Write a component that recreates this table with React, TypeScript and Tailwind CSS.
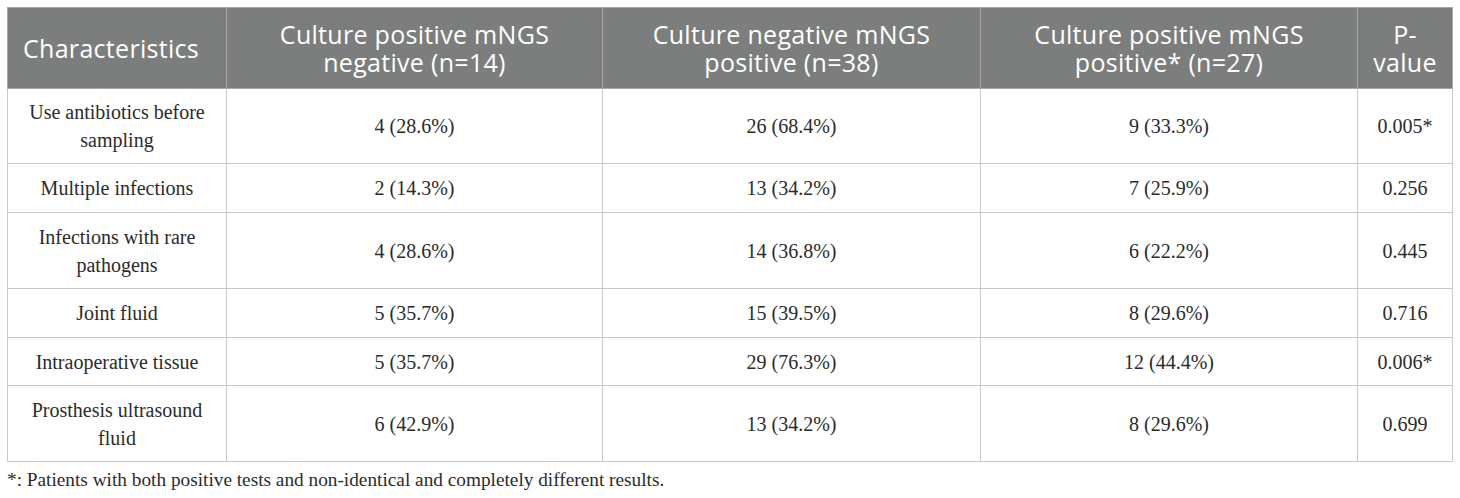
import React from "react";

const rows: [string, string, string, string, string][] = [
  ["Use antibiotics before sampling", "4 (28.6%)", "26 (68.4%)", "9 (33.3%)", "0.005*"],
  ["Multiple infections", "2 (14.3%)", "13 (34.2%)", "7 (25.9%)", "0.256"],
  ["Infections with rare pathogens", "4 (28.6%)", "14 (36.8%)", "6 (22.2%)", "0.445"],
  ["Joint fluid", "5 (35.7%)", "15 (39.5%)", "8 (29.6%)", "0.716"],
  ["Intraoperative tissue", "5 (35.7%)", "29 (76.3%)", "12 (44.4%)", "0.006*"],
  ["Prosthesis ultrasound fluid", "6 (42.9%)", "13 (34.2%)", "8 (29.6%)", "0.699"],
];

const heights = ["h-[75px]", "h-[49px]", "h-[76px]", "h-[49px]", "h-[48px]", "h-[76px]"];

export default function App() {
  return (
    <div className="bg-white w-[1460px] h-[498px] pl-[7px] pt-[7px]">
      <table className="table-fixed border-collapse w-[1445px]">
        <colgroup>
          <col className="w-[219px]" />
          <col className="w-[376px]" />
          <col className="w-[378px]" />
          <col className="w-[377px]" />
          <col className="w-[95px]" />
        </colgroup>
        <thead>
          <tr className="h-[81px] bg-[#7c7e7d] text-white text-[25px] leading-[28px] tracking-[0.3px] font-['Open_Sans',sans-serif]">
            <th className="font-normal text-left pl-[15px] border border-[#a9a9a9]">Characteristics</th>
            <th className="font-normal text-center px-[40px] border border-[#a9a9a9]">Culture positive mNGS negative (n=14)</th>
            <th className="font-normal text-center px-[40px] border border-[#a9a9a9]">Culture negative mNGS positive (n=38)</th>
            <th className="font-normal text-center px-[40px] border border-[#a9a9a9]">Culture positive mNGS positive* (n=27)</th>
            <th className="font-normal text-center px-[10px] border border-[#a9a9a9]">P-value</th>
          </tr>
        </thead>
        <tbody className="text-[#2b2b2b] text-[20px] leading-[28px] font-['Liberation_Serif',serif]">
          {rows.map((r, i) => (
            <tr key={i} className={heights[i]}>
              <td className="text-center px-[14px] border border-[#cacaca]">{r[0]}</td>
              <td className="text-center border border-[#cacaca]">{r[1]}</td>
              <td className="text-center border border-[#cacaca]">{r[2]}</td>
              <td className="text-center border border-[#cacaca]">{r[3]}</td>
              <td className="text-center border border-[#cacaca]">{r[4]}</td>
            </tr>
          ))}
        </tbody>
      </table>
      <p className="mt-[5px] text-[19.3px] leading-[26px] text-[#2b2b2b] font-['Liberation_Serif',serif]">
        *: Patients with both positive tests and non-identical and completely different results.
      </p>
    </div>
  );
}
